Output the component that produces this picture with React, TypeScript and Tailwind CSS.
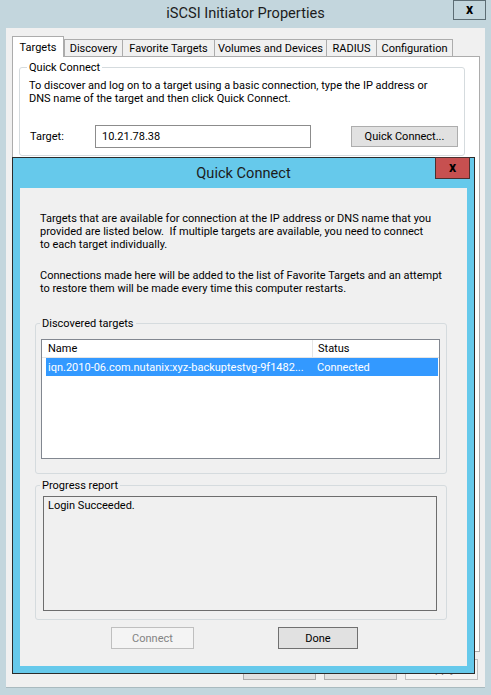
import React from 'react';

type TabProps = {
  label: string;
  width: string;
  selected?: boolean;
  last?: boolean;
};

function Tab({ label, width, selected, last }: TabProps) {
  if (selected) {
    return (
      <div className={`${width} h-[21px] bg-white border-t border-l border-r border-[#acacac] flex items-center justify-center whitespace-nowrap relative z-10`}>
        {label}
      </div>
    );
  }
  return (
    <div className={`${width} h-[18px] bg-[#f0f0f0] border-t border-b border-[#acacac] ${last ? 'border-r' : ''} border-l flex items-center justify-center whitespace-nowrap`}>
      {label}
    </div>
  );
}

function WinButton({ label, className, disabled, isDefault }: { label: string; className: string; disabled?: boolean; isDefault?: boolean }) {
  const tone = disabled
    ? 'bg-[#f4f4f4] border-[#bfbfbf] text-[#838383]'
    : isDefault
      ? 'bg-[#e1e1e1] border-[#707070] text-black'
      : 'bg-[#e1e1e1] border-[#adadad] text-black';
  return <div className={`${className} border flex items-center justify-center whitespace-nowrap ${tone}`}>{label}</div>;
}

function ParentWindow() {
  return (
    <div className="flex flex-col px-[6px]">
      <div className="relative h-[28px] shrink-0 flex items-center justify-center pb-[2px]">
        <span className="text-[14.6px] leading-[20px] text-[#1c1c1c]">iSCSI Initiator Properties</span>
        <div className="absolute top-0 left-[447px] w-[33px] h-[20px] border border-[#5d6d74] flex items-center justify-center">
          <span className="text-[14px] leading-[14px] font-bold -mt-[2px]">x</span>
        </div>
      </div>

      <div className="h-[660px] bg-[#f0f0f0] border-b border-[#a9babf] pl-[6px] pt-[8px] flex flex-col">
        <div className="flex items-end -mb-px">
          <Tab label="Targets" width="w-[52px]" selected />
          <Tab label="Discovery" width="w-[58px]" />
          <Tab label="Favorite Targets" width="w-[92px]" />
          <Tab label="Volumes and Devices" width="w-[112px]" />
          <Tab label="RADIUS" width="w-[50px]" />
          <Tab label="Configuration" width="w-[77px]" last />
        </div>

        <div className="w-[468px] h-[596px] shrink-0 bg-white border border-[#acacac] pl-[6px] pt-[3px]">
          <fieldset className="w-[446px] h-[96px] border border-[#d5dbde] rounded-[3px] pl-[9px] pr-[6px]">
            <legend className="ml-[-2px] px-[2px] leading-[15px]">Quick Connect</legend>
            <p className="leading-[13px] mt-[4px] whitespace-nowrap">
              To discover and log on to a target using a basic connection, type the IP address or
              <br />
              DNS name of the target and then click Quick Connect.
            </p>
            <div className="flex items-center mt-[20px]">
              <span className="w-[66px] pl-px">Target:</span>
              <div className="w-[216px] h-[23px] border border-[#8c8c8c] bg-white flex items-center pl-[6px]">10.21.78.38</div>
              <WinButton label="Quick Connect..." className="ml-[40px] w-[107px] h-[21px]" />
            </div>
          </fieldset>
        </div>

        <div className="flex justify-end gap-[8px] pr-[7px] mt-[7px]">
          <WinButton label="OK" className="w-[73px] h-[21px]" />
          <WinButton label="Cancel" className="w-[73px] h-[21px]" />
          <WinButton label="Apply" className="w-[73px] h-[21px]" disabled />
        </div>
      </div>
    </div>
  );
}

function QuickConnectDialog() {
  return (
    <div className="absolute left-[12px] top-[157px] w-[463px] h-[517px] border border-[#2b2b2b] bg-[#66c9eb] flex flex-col">
      <div className="relative h-[30px] shrink-0 flex items-center justify-center">
        <span className="text-[14.6px] leading-[20px] text-[#1c1c1c]">Quick Connect</span>
        <div className="absolute top-[-1px] right-[4px] w-[35px] h-[22px] bg-[#c75050] border border-[#4a3030] flex items-center justify-center">
          <span className="text-[14px] leading-[14px] font-bold -mt-[2px]">x</span>
        </div>
      </div>

      <div className="flex-1 min-h-0 mx-[7px] mb-[7px] bg-[#f0f0f0] px-[15px] pt-[24px] flex flex-col">
        <p className="leading-[13px] px-[5px] whitespace-nowrap">
          Targets that are available for connection at the IP address or DNS name that you
          <br />
          provided are listed below.&nbsp; If multiple targets are available, you need to connect
          <br />
          to each target individually.
        </p>
        <p className="leading-[13px] px-[5px] mt-[18px] whitespace-nowrap">
          Connections made here will be added to the list of Favorite Targets and an attempt
          <br />
          to restore them will be made every time this computer restarts.
        </p>

        <fieldset className="w-[412px] mt-[21px] border border-[#d5dbde] rounded-[3px] pb-[14px]">
          <legend className="ml-[4px] px-[2px] leading-[15px]">Discovered targets</legend>
          <div className="ml-[5px] mt-[8px] w-[399px] h-[120px] border border-[#828790] bg-white flex flex-col">
            <div className="flex h-[18px] border-b border-[#e5e5e5]">
              <div className="w-[271px] border-r border-[#e5e5e5] pl-[6px] flex items-center">Name</div>
              <div className="pl-[5px] flex items-center">Status</div>
            </div>
            <div className="flex h-[18px] ml-[4px] mr-px bg-[#3399ff] text-white">
              <div className="w-[266px] pl-[2px] flex items-center whitespace-nowrap overflow-hidden">iqn.2010-06.com.nutanix:xyz-backuptestvg-9f1482...</div>
              <div className="pl-[5px] flex items-center">Connected</div>
            </div>
          </div>
        </fieldset>

        <fieldset className="w-[412px] mt-[4px] border border-[#d5dbde] rounded-[3px] pb-[8px]">
          <legend className="ml-[4px] px-[2px] leading-[15px]">Progress report</legend>
          <div className="ml-[7px] mt-[3px] w-[394px] h-[115px] border border-[#6d6d6d] bg-[#f0f0f0] pl-[4px] pt-[1px]">
            Login Succeeded.
          </div>
        </fieldset>

        <div className="flex mt-[7px] pl-[76px] gap-[84px]">
          <WinButton label="Connect" className="w-[83px] h-[22px]" disabled />
          <WinButton label="Done" className="w-[80px] h-[22px]" isDefault />
        </div>
      </div>
    </div>
  );
}

export default function App() {
  return (
    <div className="relative w-[491px] h-[695px] overflow-hidden bg-[#c3d6dd] text-[11px] leading-[15px] text-black font-['Roboto',sans-serif]">
      <ParentWindow />
      <QuickConnectDialog />
    </div>
  );
}
